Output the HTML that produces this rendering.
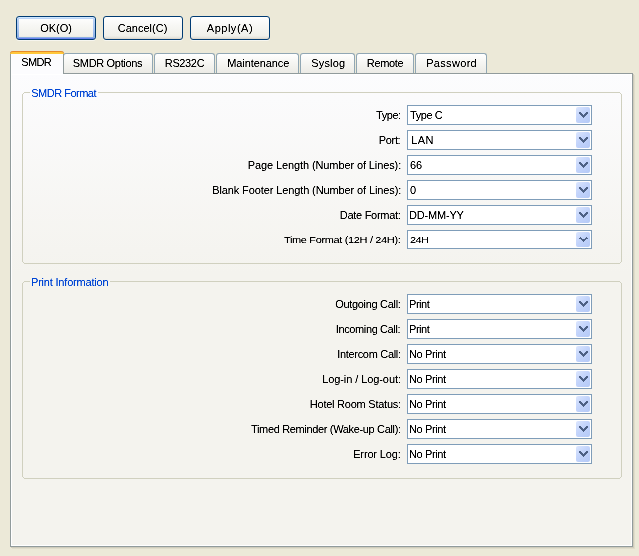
<!DOCTYPE html>
<html><head><meta charset="utf-8"><style>
*{box-sizing:border-box}
html,body{margin:0;padding:0}
body{width:639px;height:556px;overflow:hidden;background:#ECE9D8;position:relative;font-family:"Liberation Sans",sans-serif;font-size:11px;color:#000}
#wrap{position:absolute;left:0;top:0;width:639px;height:556px;will-change:transform}
.tx{position:absolute;white-space:nowrap;line-height:13px;height:13px}
.pb{position:absolute;top:16px;width:80px;height:24px;border:1px solid #003C74;border-radius:3px;
 background:linear-gradient(#FFFFFF 0%,#F7F7F4 40%,#F0F0EA 85%,#E5E4DD 94%,#D8D2C6 100%);box-shadow:0 1px 0 rgba(255,255,255,.6)}
.pb.def{box-shadow:0 1px 0 rgba(255,255,255,.6),inset 0 1px 0 #CEE7FF,inset 0 2px 0 #BCD4F6,inset 0 -1px 0 #6982EE,inset 0 -2px 0 #89ADE4}
.pb.def:before{content:"";position:absolute;left:0;right:0;top:1px;bottom:1px;border-left:2px solid transparent;border-right:2px solid transparent;background:linear-gradient(#BCD4F6,#A9C6F2 50%,#89ADE4) left/2px 100% no-repeat,linear-gradient(#BCD4F6,#A9C6F2 50%,#89ADE4) right/2px 100% no-repeat;background-origin:border-box}
.panel{position:absolute;left:10px;top:73px;width:623px;height:474px;border:1px solid #919B9C;
 background:linear-gradient(#FCFCFE 0px,#F4F3EE 200px,#F4F3EE 100%);box-shadow:1px 1px 0 #CFCCBC, 2px 2px 0 #E0DDCB}
.panel:after{content:"";position:absolute;right:0;bottom:0;left:0;top:0;border:1px solid #fff}
.tab{position:absolute;top:53px;height:20px;border:1px solid #91A7B4;border-bottom:none;border-radius:3px 3px 0 0;
 background:linear-gradient(#FFFFFF,#F3F3EF 60%,#ECEBE6)}
.tsel{position:absolute;left:10px;top:51px;width:54px;height:23px;background:#FCFCFE;box-shadow:inset 1px 0 0 #fff;border-left:1px solid #919B9C;border-right:1px solid #919B9C;border-radius:3px 3px 0 0}
.tsel:before{content:"";position:absolute;left:-1px;right:-1px;top:0;height:2px;background:#FFC83C;border-top:1px solid #E68B2C;border-radius:3px 3px 0 0}
.gb{position:absolute;left:22px;width:600px;border:1px solid #D0D0BF;border-radius:4px;margin:0;padding:0}
.gb legend{margin-left:7px;padding:0;line-height:13px;height:13px;font-size:11px}
#txt{position:absolute;left:0;top:0;width:639px;height:556px;filter:url(#th)}
.cb{position:absolute;left:407px;width:185px;border:1px solid #7F9DB9;background:#fff}
.btn{position:absolute;right:1px;top:1px;width:14px;border-radius:2px;background:linear-gradient(135deg,#DCE6FE 0%,#C3D4FB 45%,#B4C9F7 100%)}
</style></head><body><div id="wrap">
<div class="pb def" style="left:16px"></div>
<div class="pb" style="left:103px"></div>
<div class="pb" style="left:190px"></div>
<div class="panel"></div>
<div class="tab" style="left:63px;width:90px"></div>
<div class="tab" style="left:154px;width:61px"></div>
<div class="tab" style="left:216px;width:83px"></div>
<div class="tab" style="left:300px;width:55px"></div>
<div class="tab" style="left:356px;width:58px"></div>
<div class="tab" style="left:415px;width:72px"></div>
<div class="tsel"></div>
<svg width="639" height="556" style="position:absolute;left:0;top:0" shape-rendering="crispEdges" fill="#D0D0BF"><rect x="24" y="92" width="6" height="1"/><rect x="98" y="92" width="522" height="1"/><rect x="620" y="93" width="1" height="1"/><rect x="23" y="93" width="1" height="1"/><rect x="621" y="94" width="1" height="168"/><rect x="22" y="94" width="1" height="168"/><rect x="620" y="262" width="1" height="1"/><rect x="23" y="262" width="1" height="1"/><rect x="24" y="263" width="596" height="1"/><rect x="24" y="281" width="6" height="1"/><rect x="110" y="281" width="510" height="1"/><rect x="620" y="282" width="1" height="1"/><rect x="23" y="282" width="1" height="1"/><rect x="621" y="283" width="1" height="194"/><rect x="22" y="283" width="1" height="194"/><rect x="620" y="477" width="1" height="1"/><rect x="23" y="477" width="1" height="1"/><rect x="24" y="478" width="596" height="1"/></svg>
<div class="cb" style="top:105px;height:20px"><div class="btn" style="height:16px"><svg width="9" height="6" style="position:absolute;left:3px;top:5px" shape-rendering="crispEdges" fill="#4D6185"><path d="M0 0h2v1h-2zM7 0h2v1h-2zM0 1h3v1h-3zM6 1h3v1h-3zM1 2h3v1h-3zM5 2h3v1h-3zM2 3h5v1h-5zM3 4h3v1h-3zM4 5h1v1h-1z"/></svg></div></div>
<div class="cb" style="top:130px;height:20px"><div class="btn" style="height:16px"><svg width="9" height="6" style="position:absolute;left:3px;top:5px" shape-rendering="crispEdges" fill="#4D6185"><path d="M0 0h2v1h-2zM7 0h2v1h-2zM0 1h3v1h-3zM6 1h3v1h-3zM1 2h3v1h-3zM5 2h3v1h-3zM2 3h5v1h-5zM3 4h3v1h-3zM4 5h1v1h-1z"/></svg></div></div>
<div class="cb" style="top:155px;height:20px"><div class="btn" style="height:16px"><svg width="9" height="6" style="position:absolute;left:3px;top:5px" shape-rendering="crispEdges" fill="#4D6185"><path d="M0 0h2v1h-2zM7 0h2v1h-2zM0 1h3v1h-3zM6 1h3v1h-3zM1 2h3v1h-3zM5 2h3v1h-3zM2 3h5v1h-5zM3 4h3v1h-3zM4 5h1v1h-1z"/></svg></div></div>
<div class="cb" style="top:180px;height:20px"><div class="btn" style="height:16px"><svg width="9" height="6" style="position:absolute;left:3px;top:5px" shape-rendering="crispEdges" fill="#4D6185"><path d="M0 0h2v1h-2zM7 0h2v1h-2zM0 1h3v1h-3zM6 1h3v1h-3zM1 2h3v1h-3zM5 2h3v1h-3zM2 3h5v1h-5zM3 4h3v1h-3zM4 5h1v1h-1z"/></svg></div></div>
<div class="cb" style="top:205px;height:20px"><div class="btn" style="height:16px"><svg width="9" height="6" style="position:absolute;left:3px;top:5px" shape-rendering="crispEdges" fill="#4D6185"><path d="M0 0h2v1h-2zM7 0h2v1h-2zM0 1h3v1h-3zM6 1h3v1h-3zM1 2h3v1h-3zM5 2h3v1h-3zM2 3h5v1h-5zM3 4h3v1h-3zM4 5h1v1h-1z"/></svg></div></div>
<div class="cb" style="top:230px;height:19px"><div class="btn" style="height:15px"><svg width="9" height="5" style="position:absolute;left:3px;top:5px" shape-rendering="crispEdges" fill="#4D6185"><path d="M1 0h1v1h-1zM7 0h1v1h-1zM0 1h3v1h-3zM6 1h3v1h-3zM2 2h5v1h-5zM3 3h3v1h-3zM4 4h1v1h-1z"/></svg></div></div>
<div class="cb" style="top:294px;height:20px"><div class="btn" style="height:16px"><svg width="9" height="6" style="position:absolute;left:3px;top:5px" shape-rendering="crispEdges" fill="#4D6185"><path d="M0 0h2v1h-2zM7 0h2v1h-2zM0 1h3v1h-3zM6 1h3v1h-3zM1 2h3v1h-3zM5 2h3v1h-3zM2 3h5v1h-5zM3 4h3v1h-3zM4 5h1v1h-1z"/></svg></div></div>
<div class="cb" style="top:319px;height:20px"><div class="btn" style="height:16px"><svg width="9" height="6" style="position:absolute;left:3px;top:5px" shape-rendering="crispEdges" fill="#4D6185"><path d="M0 0h2v1h-2zM7 0h2v1h-2zM0 1h3v1h-3zM6 1h3v1h-3zM1 2h3v1h-3zM5 2h3v1h-3zM2 3h5v1h-5zM3 4h3v1h-3zM4 5h1v1h-1z"/></svg></div></div>
<div class="cb" style="top:344px;height:20px"><div class="btn" style="height:16px"><svg width="9" height="6" style="position:absolute;left:3px;top:5px" shape-rendering="crispEdges" fill="#4D6185"><path d="M0 0h2v1h-2zM7 0h2v1h-2zM0 1h3v1h-3zM6 1h3v1h-3zM1 2h3v1h-3zM5 2h3v1h-3zM2 3h5v1h-5zM3 4h3v1h-3zM4 5h1v1h-1z"/></svg></div></div>
<div class="cb" style="top:369px;height:20px"><div class="btn" style="height:16px"><svg width="9" height="6" style="position:absolute;left:3px;top:5px" shape-rendering="crispEdges" fill="#4D6185"><path d="M0 0h2v1h-2zM7 0h2v1h-2zM0 1h3v1h-3zM6 1h3v1h-3zM1 2h3v1h-3zM5 2h3v1h-3zM2 3h5v1h-5zM3 4h3v1h-3zM4 5h1v1h-1z"/></svg></div></div>
<div class="cb" style="top:394px;height:20px"><div class="btn" style="height:16px"><svg width="9" height="6" style="position:absolute;left:3px;top:5px" shape-rendering="crispEdges" fill="#4D6185"><path d="M0 0h2v1h-2zM7 0h2v1h-2zM0 1h3v1h-3zM6 1h3v1h-3zM1 2h3v1h-3zM5 2h3v1h-3zM2 3h5v1h-5zM3 4h3v1h-3zM4 5h1v1h-1z"/></svg></div></div>
<div class="cb" style="top:419px;height:20px"><div class="btn" style="height:16px"><svg width="9" height="6" style="position:absolute;left:3px;top:5px" shape-rendering="crispEdges" fill="#4D6185"><path d="M0 0h2v1h-2zM7 0h2v1h-2zM0 1h3v1h-3zM6 1h3v1h-3zM1 2h3v1h-3zM5 2h3v1h-3zM2 3h5v1h-5zM3 4h3v1h-3zM4 5h1v1h-1z"/></svg></div></div>
<div class="cb" style="top:444px;height:20px"><div class="btn" style="height:16px"><svg width="9" height="6" style="position:absolute;left:3px;top:5px" shape-rendering="crispEdges" fill="#4D6185"><path d="M0 0h2v1h-2zM7 0h2v1h-2zM0 1h3v1h-3zM6 1h3v1h-3zM1 2h3v1h-3zM5 2h3v1h-3zM2 3h5v1h-5zM3 4h3v1h-3zM4 5h1v1h-1z"/></svg></div></div>
<svg width="0" height="0" style="position:absolute"><filter id="th" x="0" y="0" width="100%" height="100%" color-interpolation-filters="sRGB"><feComponentTransfer><feFuncA type="linear" slope="1.6" intercept="-0.2"/></feComponentTransfer></filter></svg>
<div id="txt">
<div class="tx" style="left:40.20px;top:22px;letter-spacing:0.000px;">OK(O)</div>
<div class="tx" style="left:117.80px;top:22px;letter-spacing:-0.001px;">Cancel(C)</div>
<div class="tx" style="left:206.80px;top:22px;letter-spacing:0.515px;">Apply(A)</div>
<div class="tx" style="left:21.20px;top:56px;letter-spacing:-0.600px;">SMDR</div>
<div class="tx" style="left:72.80px;top:57px;letter-spacing:-0.327px;">SMDR Options</div>
<div class="tx" style="left:164.80px;top:57px;letter-spacing:-0.360px;">RS232C</div>
<div class="tx" style="left:227.20px;top:57px;letter-spacing:-0.090px;">Maintenance</div>
<div class="tx" style="left:311.20px;top:57px;letter-spacing:0.180px;">Syslog</div>
<div class="tx" style="left:366.80px;top:57px;letter-spacing:-0.360px;">Remote</div>
<div class="tx" style="left:426.20px;top:57px;letter-spacing:0.322px;">Password</div>
<div class="tx" style="left:31.20px;top:87px;letter-spacing:-0.495px;color:#0046D5;">SMDR Format</div>
<div class="tx" style="left:31.00px;top:276px;letter-spacing:-0.197px;color:#0046D5;">Print Information</div>
<div class="tx" style="left:376.00px;top:109px;letter-spacing:-0.450px;">Type:</div>
<div class="tx" style="left:410.00px;top:109px;letter-spacing:-0.450px;">Type C</div>
<div class="tx" style="left:378.80px;top:134px;letter-spacing:-0.340px;">Port:</div>
<div class="tx" style="left:411.20px;top:134px;letter-spacing:0.450px;">LAN</div>
<div class="tx" style="left:247.80px;top:159px;letter-spacing:-0.107px;">Page Length (Number of Lines):</div>
<div class="tx" style="left:410.00px;top:159px;letter-spacing:0.000px;">66</div>
<div class="tx" style="left:212.20px;top:184px;letter-spacing:-0.110px;">Blank Footer Length (Number of Lines):</div>
<div class="tx" style="left:410.00px;top:184px;letter-spacing:0.000px;">0</div>
<div class="tx" style="left:339.80px;top:209px;letter-spacing:-0.287px;">Date Format:</div>
<div class="tx" style="left:409.00px;top:209px;letter-spacing:-0.192px;">DD-MM-YY</div>
<div class="tx" style="left:284.00px;top:234px;letter-spacing:-0.351px;transform:scaleY(0.875);transform-origin:0 2px;">Time Format (12H / 24H):</div>
<div class="tx" style="left:410.00px;top:234px;letter-spacing:-0.675px;transform:scaleY(0.875);transform-origin:0 2px;">24H</div>
<div class="tx" style="left:335.20px;top:298px;letter-spacing:-0.311px;">Outgoing Call:</div>
<div class="tx" style="left:409.00px;top:298px;letter-spacing:-0.450px;">Print</div>
<div class="tx" style="left:335.80px;top:323px;letter-spacing:-0.381px;">Incoming Call:</div>
<div class="tx" style="left:409.00px;top:323px;letter-spacing:-0.450px;">Print</div>
<div class="tx" style="left:337.20px;top:348px;letter-spacing:-0.310px;">Intercom Call:</div>
<div class="tx" style="left:409.00px;top:348px;letter-spacing:-0.386px;">No Print</div>
<div class="tx" style="left:322.20px;top:373px;letter-spacing:-0.083px;">Log-in / Log-out:</div>
<div class="tx" style="left:409.00px;top:373px;letter-spacing:-0.386px;">No Print</div>
<div class="tx" style="left:309.80px;top:398px;letter-spacing:-0.239px;">Hotel Room Status:</div>
<div class="tx" style="left:409.00px;top:398px;letter-spacing:-0.386px;">No Print</div>
<div class="tx" style="left:251.00px;top:423px;letter-spacing:-0.341px;">Timed Reminder (Wake-up Call):</div>
<div class="tx" style="left:409.00px;top:423px;letter-spacing:-0.386px;">No Print</div>
<div class="tx" style="left:353.20px;top:448px;letter-spacing:-0.150px;">Error Log:</div>
<div class="tx" style="left:409.00px;top:448px;letter-spacing:-0.386px;">No Print</div>
</div></div></body></html>
